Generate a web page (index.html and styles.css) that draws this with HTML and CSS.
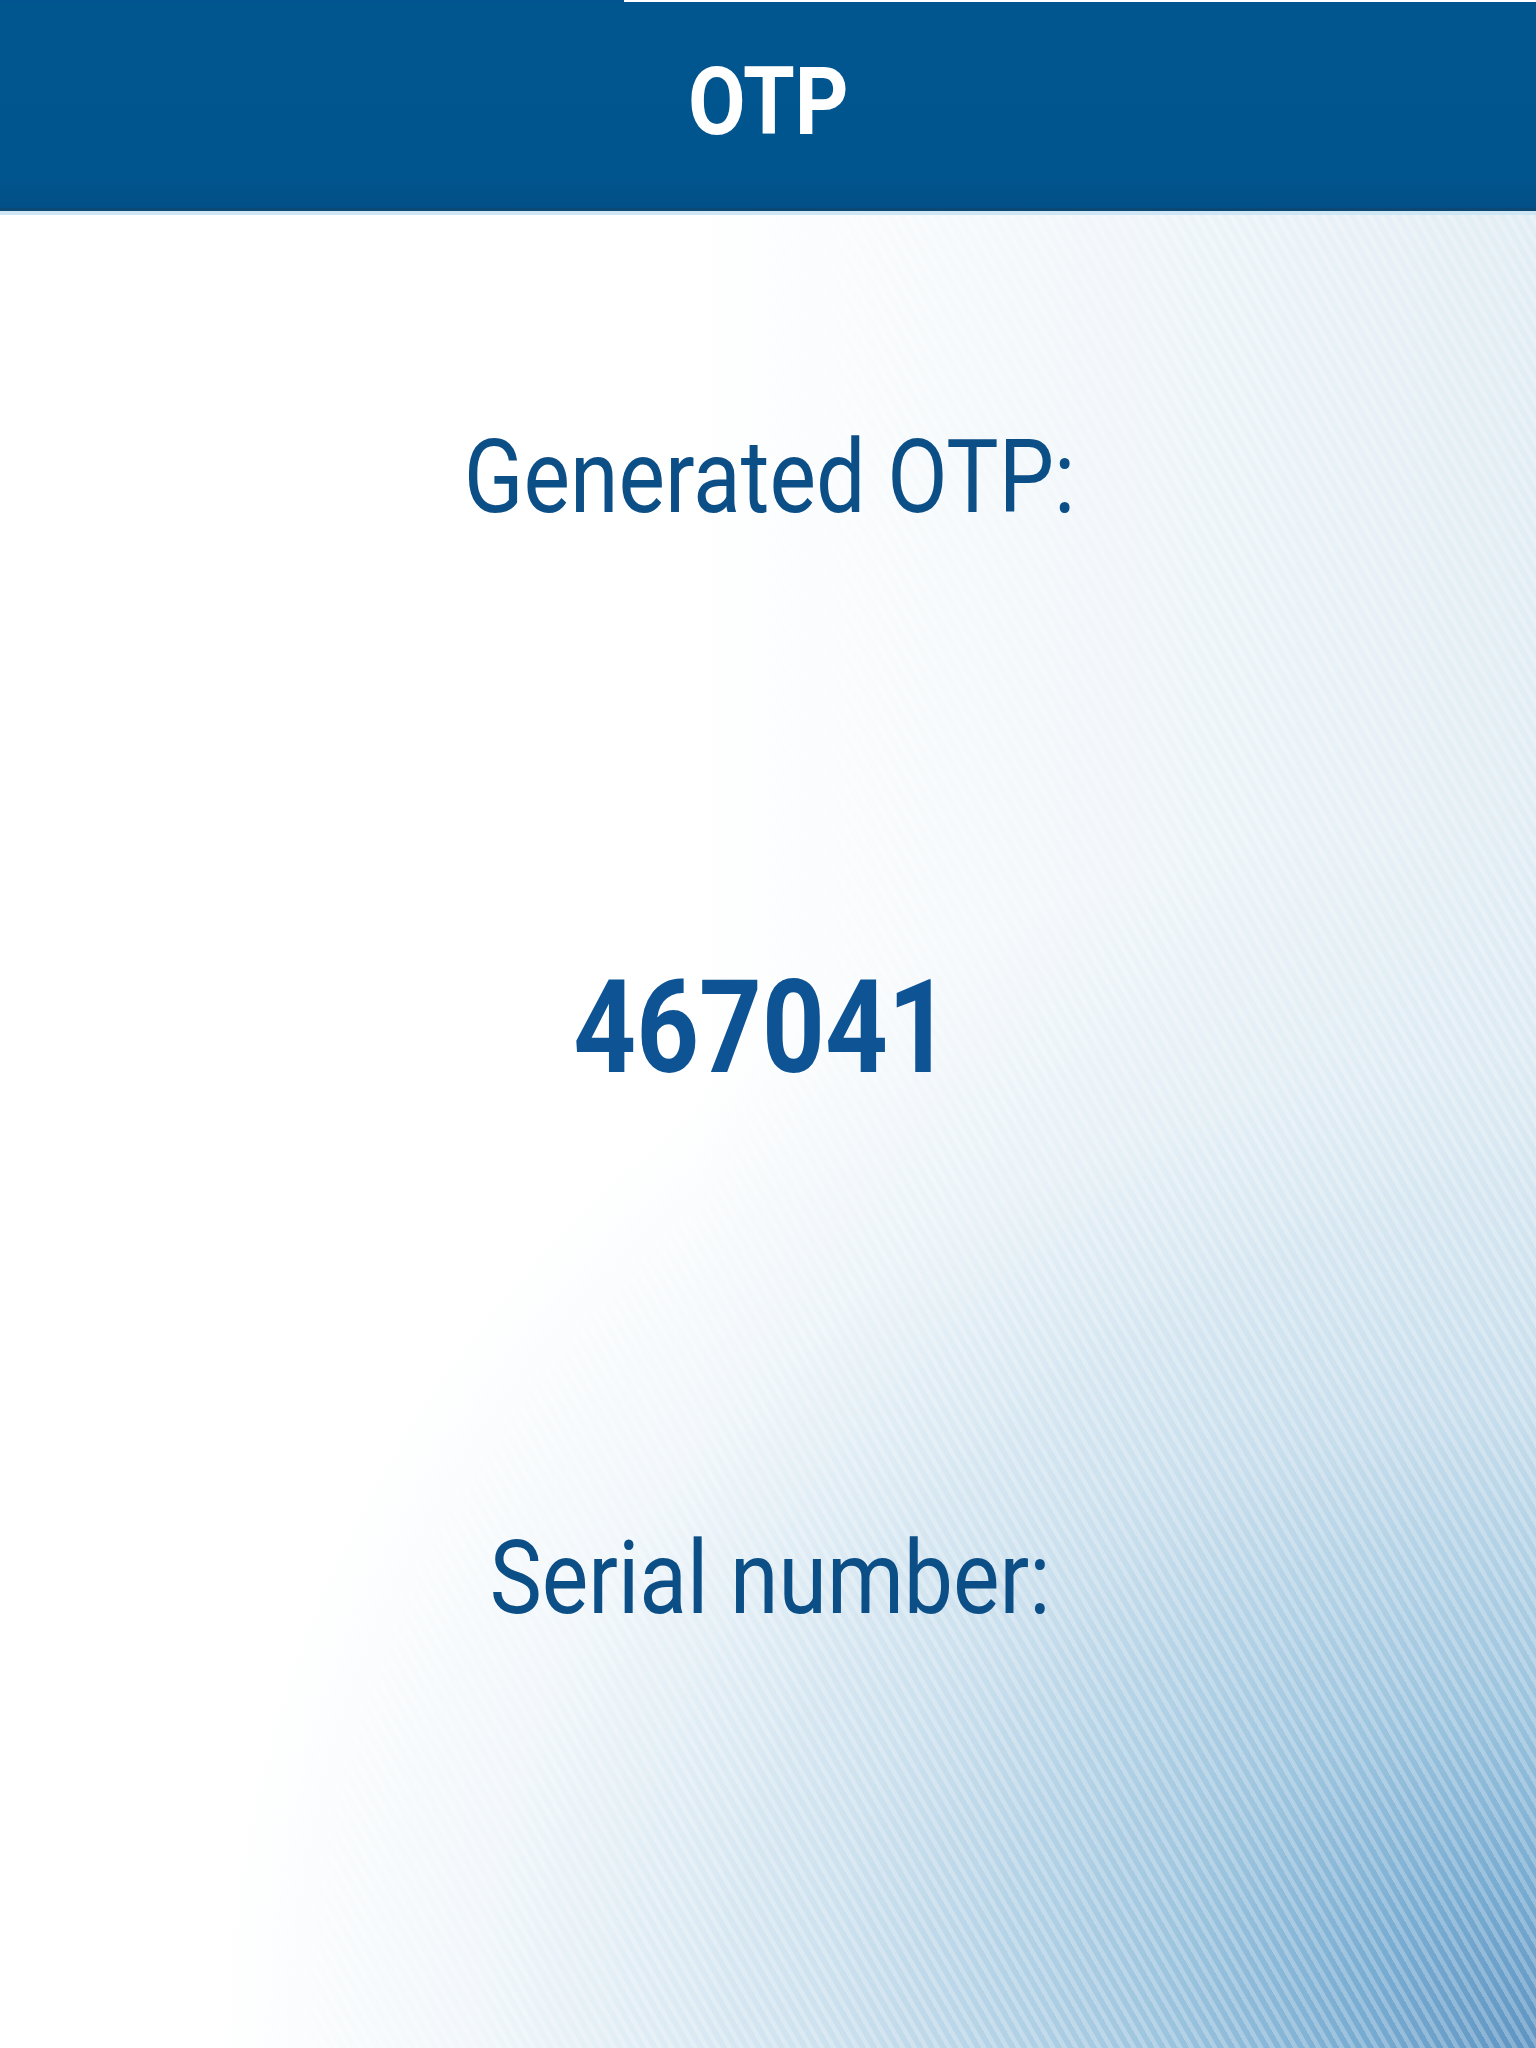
FILE: index.html
```html
<!DOCTYPE html>
<html lang="en">
<head>
<meta charset="utf-8">
<title>OTP</title>
<link rel="stylesheet" href="styles.css">
</head>
<body>
<header class="app-bar">
  <h1 class="app-title"><span class="squeeze-title">OTP</span></h1>
</header>
<main class="otp-screen">
  <p class="label"><span class="squeeze">Generated OTP:</span></p>
  <p class="otp-code"><span class="squeeze-code">467041</span></p>
  <p class="label"><span class="squeeze">Serial number:</span></p>
</main>
</body>
</html>
```
FILE: styles.css
```css
html, body {
  margin: 0;
  padding: 0;
}

body {
  width: 1536px;
  height: 2048px;
  overflow: hidden;
  font-family: Roboto, "Noto Sans", "Liberation Sans", sans-serif;
  background: #ffffff;
}

.app-bar {
  box-sizing: border-box;
  height: 211px;
  padding-top: 54px;
  background:
    linear-gradient(to right, #01548f 624px, #ffffff 624px) top left / 100% 2px no-repeat,
    linear-gradient(to bottom, #01568f 0%, #01558f 85%, #024f86 100%);
  border-bottom: 3px solid #0b4874;
  text-align: center;
}

.app-title {
  margin: 0;
  font-size: 95px;
  line-height: 1;
  font-weight: 700;
  color: #ffffff;
}

.squeeze-title {
  display: inline-block;
  transform: scaleX(0.88);
}

.otp-screen {
  box-sizing: border-box;
  height: 1837px;
  border-top: 4px solid #cfe6f5;
  padding-top: 211px;
  display: flex;
  flex-direction: column;
  align-items: center;
  gap: 435px;
  background:
    repeating-linear-gradient(60deg,
      rgba(255, 255, 255, 0.26) 0px,
      rgba(255, 255, 255, 0.26) 4px,
      rgba(255, 255, 255, 0) 5px,
      rgba(255, 255, 255, 0) 10px),
    radial-gradient(1550px 1450px at 100% 100%,
      #5e94c2 0%,
      #7aadd2 12%,
      #9fc6df 25%,
      rgba(198, 221, 236, 0.9) 45%,
      rgba(212, 230, 241, 0.35) 68%,
      rgba(215, 232, 242, 0) 85%),
    linear-gradient(to right,
      rgba(222, 235, 243, 0) 45%,
      rgba(222, 235, 243, 0.9) 100%),
    #ffffff;
}

.label {
  margin: 0 0 0 4px;
  font-size: 102px;
  line-height: 1;
  font-weight: 400;
  color: #0c4f87;
  white-space: nowrap;
}

.otp-code {
  margin: 0 0 0 -12px;
  font-size: 129px;
  line-height: 1;
  font-weight: 700;
  color: #0e5494;
  white-space: nowrap;
}

.squeeze {
  display: inline-block;
  transform: scaleX(0.86);
}

.squeeze-code {
  display: inline-block;
  transform: scaleX(0.85);
}
```
